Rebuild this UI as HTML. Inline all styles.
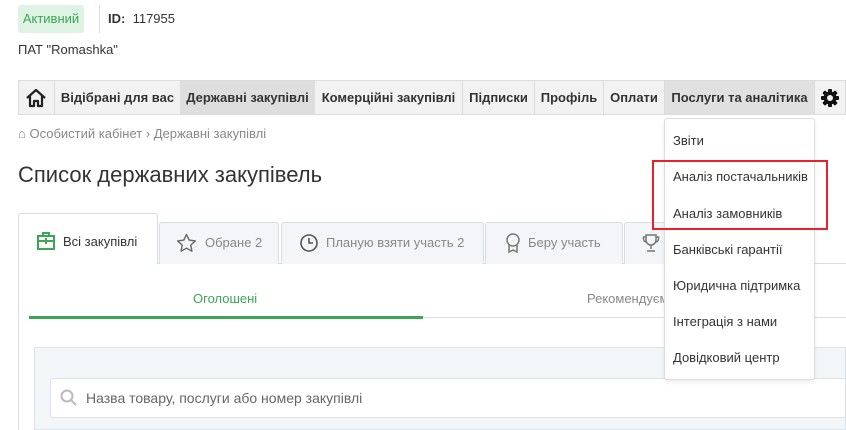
<!DOCTYPE html>
<html><head><meta charset="utf-8"><style>
*{box-sizing:border-box;margin:0;padding:0}
body{width:846px;height:430px;overflow:hidden;background:#fff;font-family:"Liberation Sans",sans-serif;color:#333;position:relative;font-size:13px}
.a{position:absolute}
.nav{top:80px;left:18px;width:828px;height:35px;background:#f2f2f2;border:1px solid #dcdcdc}
.ni{position:absolute;top:0;height:33px;line-height:33px;font-weight:bold;font-size:13px;color:#333;text-align:center;border-left:1px solid #dcdcdc}
.dd{left:664px;top:118px;width:151px;height:262px;background:#fff;border:1px solid #ddd;border-radius:3px;box-shadow:0 2px 4px rgba(0,0,0,.08)}
.di{position:absolute;left:8px;font-size:13px;color:#333}
.tab{position:absolute;top:222px;height:42px;background:#f3f5f8;border:1px solid #d8dde3;border-bottom:none;border-radius:3px 3px 0 0;color:#888;font-size:13px;line-height:40px}
.tab svg{position:absolute;top:10px}
.tab span{position:absolute;top:0}
</style></head><body>
<div class="a" style="left:18px;top:5px;width:66px;height:28px;background:#dff3e4;border-radius:3px;color:#3aa757;font-size:13px;line-height:28px;text-align:center">Активний</div>
<div class="a" style="left:99px;top:5px;width:1px;height:28px;background:#ddd"></div>
<div class="a" style="left:108px;top:11px;font-size:13px"><b>ID:</b>&nbsp; 117955</div>
<div class="a" style="left:18px;top:42px;font-size:13px">ПАТ "Romashka"</div>

<div class="a nav">
<svg class="a" style="left:6px;top:6px" width="22" height="22" viewBox="0 0 22 22" fill="none" stroke="#222" stroke-width="2.2" stroke-linejoin="round"><path d="M2 11 L11 3 L20 11 M5 9 V19 H9 V14 H13 V19 H17 V9"/></svg>
<div class="ni" style="left:35px;width:126px">Відібрані для вас</div>
<div class="ni" style="left:161px;width:134px;background:#dedede">Державні закупівлі</div>
<div class="ni" style="left:295px;width:148px">Комерційні закупівлі</div>
<div class="ni" style="left:443px;width:72px">Підписки</div>
<div class="ni" style="left:515px;width:69px">Профіль</div>
<div class="ni" style="left:584px;width:61px">Оплати</div>
<div class="ni" style="left:645px;width:150px;background:#e0e0e0">Послуги та аналітика</div>
<div class="ni" style="left:795px;width:31px">
<svg style="position:absolute;left:5px;top:7px" width="20" height="20" viewBox="0 0 20 20"><g fill="#111"><circle cx="10" cy="10" r="6.5"/><rect x="8" y="1" width="4" height="18" rx="1"/><rect x="1" y="8" width="18" height="4" rx="1"/><rect x="8" y="1" width="4" height="18" rx="1" transform="rotate(45 10 10)"/><rect x="8" y="1" width="4" height="18" rx="1" transform="rotate(-45 10 10)"/></g><circle cx="10" cy="10" r="3" fill="#f2f2f2"/></svg>
</div>
</div>

<div class="a" style="left:18px;top:126px;font-size:13px;color:#888">⌂ Особистий кабінет › Державні закупівлі</div>
<div class="a" style="left:18px;top:162px;font-size:22px;color:#333">Список державних закупівель</div>

<div class="a" style="left:18px;top:263px;width:828px;height:1px;background:#d8dde3"></div>
<div class="a" style="left:18px;top:263px;width:1px;height:167px;background:#d8dde3"></div>
<div class="a" style="left:18px;top:213px;width:140px;height:51px;background:#fff;border:1px solid #d8dde3;border-bottom:none;border-radius:3px 3px 0 0"></div>
<svg class="a" style="left:36px;top:231px" width="20" height="20" viewBox="0 0 20 20" fill="none" stroke="#3aa757" stroke-width="2"><rect x="2" y="5" width="16" height="13"/><path d="M7 5V2h6v3M2 10h16M10 7v6M7 10h6"/></svg>
<div class="a" style="left:63px;top:234px;font-size:13px;color:#333">Всі закупівлі</div>
<div class="tab" style="left:159px;width:120px">
<svg style="left:16px" width="21" height="21" viewBox="0 0 21 21" fill="none" stroke="#666" stroke-width="1.4" stroke-linejoin="round"><path d="M10.5 1.5l2.7 5.6 6.1.8-4.5 4.2 1.1 6.1-5.4-3-5.4 3 1.1-6.1L1.7 7.9l6.1-.8z"/></svg>
<span style="left:45px">Обране 2</span></div>
<div class="tab" style="left:281px;width:203px">
<svg style="left:17px" width="20" height="20" viewBox="0 0 20 20" fill="none" stroke="#555" stroke-width="1.6"><circle cx="10" cy="10" r="8"/><path d="M10 5v5h4"/></svg>
<span style="left:44px">Планую взяти участь 2</span></div>
<div class="tab" style="left:485px;width:138px">
<svg style="left:19px" width="16" height="21" viewBox="0 0 16 21" fill="none" stroke="#777" stroke-width="1.5"><circle cx="8" cy="7" r="6"/><path d="M4 12v7l4-2 4 2v-7"/></svg>
<span style="left:42px">Беру участь</span></div>
<div class="tab" style="left:624px;width:60px">
<svg style="left:17px" width="18" height="20" viewBox="0 0 18 20" fill="none" stroke="#777" stroke-width="1.5"><path d="M4 2h10v5a5 5 0 0 1-10 0zM4 4H1.5v2a3 3 0 0 0 3 3M14 4h2.5v2a3 3 0 0 1-3 3M9 12v4M5 18h8"/></svg>
</div>

<div class="a" style="left:193px;top:291px;font-size:13px;color:#3aa757">Оголошені</div>
<div class="a" style="left:587px;top:291px;font-size:13px;color:#888">Рекомендуєм</div>
<div class="a" style="left:29px;top:317px;width:817px;height:1px;background:#ddd"></div>
<div class="a" style="left:29px;top:316px;width:394px;height:3px;background:#3aa757"></div>

<div class="a" style="left:34px;top:347px;width:812px;height:83px;background:#f3f6f9;border:1px solid #dde3ea"></div>
<div class="a" style="left:50px;top:378px;width:796px;height:40px;background:#fff;border:1px solid #dde3ea;border-radius:3px"></div>
<svg class="a" style="left:60px;top:389px" width="18" height="18" viewBox="0 0 18 18" fill="none" stroke="#bbb" stroke-width="2"><circle cx="7" cy="7" r="5.5"/><path d="M11 11l5 5"/></svg>
<div class="a" style="left:86px;top:390px;font-size:14px;color:#666">Назва товару, послуги або номер закупівлі</div>

<div class="a dd">
<div class="di" style="top:14px">Звіти</div>
<div class="di" style="top:50px">Аналіз постачальників</div>
<div class="di" style="top:87px">Аналіз замовників</div>
<div class="di" style="top:123px">Банківські гарантії</div>
<div class="di" style="top:159px">Юридична підтримка</div>
<div class="di" style="top:195px">Інтеграція з нами</div>
<div class="di" style="top:231px">Довідковий центр</div>
</div>
<div class="a" style="left:652px;top:160px;width:176px;height:70px;border:2px solid #e8212b"></div>
</body></html>
